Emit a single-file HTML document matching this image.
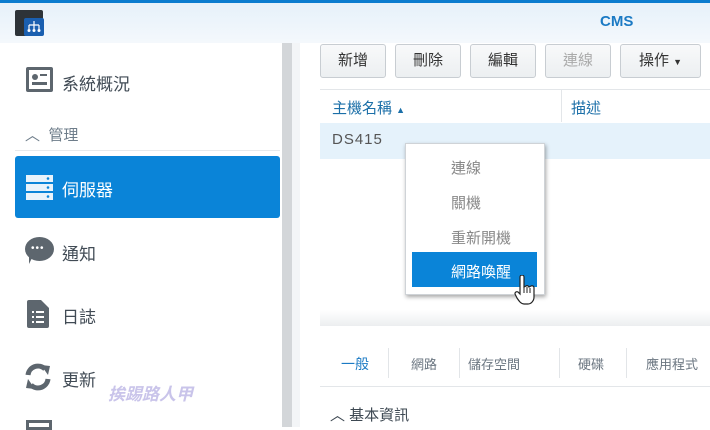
<!DOCTYPE html>
<html><head><meta charset="utf-8"><style>
*{margin:0;padding:0;box-sizing:border-box}
body{width:710px;height:427px;overflow:hidden;position:relative;background:#fff;font-family:"Liberation Sans","Noto Sans CJK TC",sans-serif;}
.a{position:absolute}
.btn{position:absolute;top:44px;height:34px;border:1px solid #c8cdd2;border-radius:3px;background:linear-gradient(#f8f9fa,#eceff1);font-size:15px;color:#333;text-align:center;line-height:32px}
.side{font-size:17px;color:#414b55}
.tab{position:absolute;top:354px;font-size:13px;color:#6a7580}
.tdiv{position:absolute;top:348px;width:1px;height:30px;background:#e2e5e8}
</style></head><body>
<div class="a" style="left:0;top:0;width:710px;height:3px;background:#0b7ccf"></div>
<div class="a" style="left:0;top:3px;width:710px;height:40px;background:linear-gradient(#e6f1fa,#f4f8fc)"></div>
<div class="a" style="left:15px;top:10px;width:28px;height:26px;background:#2d3338;border-radius:2px"></div>
<div class="a" style="left:24px;top:18px;width:20px;height:18px;background:#1a5fb0;border-radius:2px"></div>
<svg class="a" style="left:26px;top:20px" width="16" height="14"><path d="M8 1v4M3 5h10M3 5v4M8 5v4M13 5v4" stroke="#fff" stroke-width="1.2" fill="none"/><circle cx="3" cy="10.5" r="1.5" fill="#fff"/><circle cx="8" cy="10.5" r="1.5" fill="#fff"/><circle cx="13" cy="10.5" r="1.5" fill="#fff"/></svg>
<div class="a" style="left:600px;top:13px;font-size:15px;font-weight:bold;color:#1b7ac4">CMS</div>

<div class="a" style="left:282px;top:43px;width:10px;height:384px;background:#d3d6d9"></div>
<div class="a" style="left:292px;top:43px;width:8px;height:384px;background:#f3f5f7"></div>

<div class="a" style="left:26px;top:67px;width:27px;height:25px;border:3px solid #5d666e;border-radius:2px"></div>
<div class="a" style="left:32px;top:74px;width:6px;height:6px;background:#5d666e;border-radius:50%"></div>
<div class="a" style="left:40px;top:74px;width:7px;height:2px;background:#5d666e"></div>
<div class="a" style="left:32px;top:82px;width:15px;height:3px;background:#5d666e"></div>
<div class="a side" style="left:62px;top:70px">系統概況</div>
<div class="a" style="left:25px;top:124px;font-size:15px;color:#6e7d8a">︿&nbsp;&nbsp;管理</div>
<div class="a" style="left:15px;top:150px;width:265px;height:1px;background:#e6e9ec"></div>
<div class="a" style="left:15px;top:156px;width:265px;height:62px;background:#0a84d8;border-radius:3px"></div>
<svg class="a" style="left:26px;top:175px" width="27" height="25"><rect x="0" y="0" width="27" height="7" fill="#e8f3fb"/><rect x="0" y="9" width="27" height="7" fill="#e8f3fb"/><rect x="0" y="18" width="27" height="7" fill="#e8f3fb"/><circle cx="22" cy="3.5" r="1.3" fill="#0a84d8"/><circle cx="22" cy="12.5" r="1.3" fill="#0a84d8"/><circle cx="22" cy="21.5" r="1.3" fill="#0a84d8"/></svg>
<div class="a side" style="left:62px;top:176px;color:#fff">伺服器</div>
<div class="a" style="left:25px;top:237px;width:29px;height:24px;background:#5d666e;border-radius:50%"></div>
<div class="a" style="left:29px;top:256px;width:0;height:0;border-left:4px solid #5d666e;border-bottom:8px solid transparent"></div>
<div class="a" style="left:31px;top:246px;font-size:10px;color:#fff;letter-spacing:1px;line-height:6px">•••</div>
<div class="a side" style="left:62px;top:240px">通知</div>
<svg class="a" style="left:27px;top:300px" width="22" height="28"><path d="M0 2a2 2 0 0 1 2-2h12l8 8v18a2 2 0 0 1-2 2H2a2 2 0 0 1-2-2z" fill="#5d666e"/><g fill="#fff"><rect x="5" y="11" width="2" height="2"/><rect x="9" y="11" width="8" height="2"/><rect x="5" y="16" width="2" height="2"/><rect x="9" y="16" width="8" height="2"/><rect x="5" y="21" width="2" height="2"/><rect x="9" y="21" width="8" height="2"/></g></svg>
<div class="a side" style="left:62px;top:303px">日誌</div>
<svg class="a" style="left:24px;top:363px" width="28" height="28"><path d="M4 12a10 10 0 0 1 17-6" stroke="#5d666e" stroke-width="5" fill="none"/><path d="M24 16a10 10 0 0 1-17 6" stroke="#5d666e" stroke-width="5" fill="none"/><path d="M17 2l9 1-2 9z" fill="#5d666e"/><path d="M11 26l-9-1 2-9z" fill="#5d666e"/></svg>
<div class="a side" style="left:62px;top:366px">更新</div>
<div class="a" style="left:108px;top:380px;font-size:17px;font-weight:bold;color:#c9c4ea;font-style:italic">挨踢路人甲</div>
<div class="a" style="left:26px;top:420px;width:26px;height:10px;border:3px solid #5d666e"></div>

<div class="btn" style="left:320px;width:66px">新增</div>
<div class="btn" style="left:395px;width:66px">刪除</div>
<div class="btn" style="left:470px;width:66px">編輯</div>
<div class="btn" style="left:545px;width:66px;color:#aaa">連線</div>
<div class="btn" style="left:620px;width:81px">操作 <span style="font-size:9px">▼</span></div>
<div class="a" style="left:320px;top:89px;width:390px;height:1px;background:#e3e6e9"></div>
<div class="a" style="left:561px;top:90px;width:1px;height:32px;background:#e3e6e9"></div>
<div class="a" style="left:332px;top:97px;font-size:15px;color:#1b6fa8">主機名稱 <span style="font-size:9px">▲</span></div>
<div class="a" style="left:571px;top:97px;font-size:15px;color:#1b6fa8">描述</div>
<div class="a" style="left:320px;top:123px;width:390px;height:36px;background:#e5f2fb"></div>
<div class="a" style="left:332px;top:131px;font-size:15px;color:#555;letter-spacing:1px">DS415</div>
<div class="a" style="left:320px;top:310px;width:390px;height:16px;background:linear-gradient(#fff,#eceef0)"></div>

<div class="a" style="left:405px;top:143px;width:140px;height:152px;background:#fff;border:1px solid #cfd3d7;box-shadow:1px 2px 4px rgba(0,0,0,.35)"></div>
<div class="a" style="left:451px;top:157px;font-size:15px;color:#888">連線</div>
<div class="a" style="left:451px;top:192px;font-size:15px;color:#888">關機</div>
<div class="a" style="left:451px;top:227px;font-size:15px;color:#888">重新開機</div>
<div class="a" style="left:412px;top:252px;width:125px;height:35px;background:#0a84d8"></div>
<div class="a" style="left:451px;top:261px;font-size:15px;color:#fff">網路喚醒</div>
<svg class="a" style="left:514px;top:275px" width="22" height="32"><path d="M6 2a2 2 0 0 1 4 0v10l2-1a2 2 0 0 1 3 1l2-1a2 2 0 0 1 3 1.5V22c0 4-3 7-6 7H10c-3 0-5-3-7-6l-2-4a2 2 0 0 1 3-2l2 2z" fill="#fff" stroke="#222" stroke-width="1.2"/><path d="M10 12v6M13 12v6M16 13v5" stroke="#222" stroke-width="1"/></svg>

<div class="tab" style="left:341px;color:#1b7ac4;font-size:14px">一般</div>
<div class="tdiv" style="left:388px"></div>
<div class="tab" style="left:411px">網路</div>
<div class="tdiv" style="left:459px"></div>
<div class="tab" style="left:468px">儲存空間</div>
<div class="tdiv" style="left:559px"></div>
<div class="tab" style="left:578px">硬碟</div>
<div class="tdiv" style="left:626px"></div>
<div class="tab" style="left:646px">應用程式</div>
<div class="a" style="left:320px;top:386px;width:390px;height:1px;background:#e3e6e9"></div>
<div class="a" style="left:330px;top:404px;font-size:15px;color:#3d4852">︿ 基本資訊</div>
</body></html>
